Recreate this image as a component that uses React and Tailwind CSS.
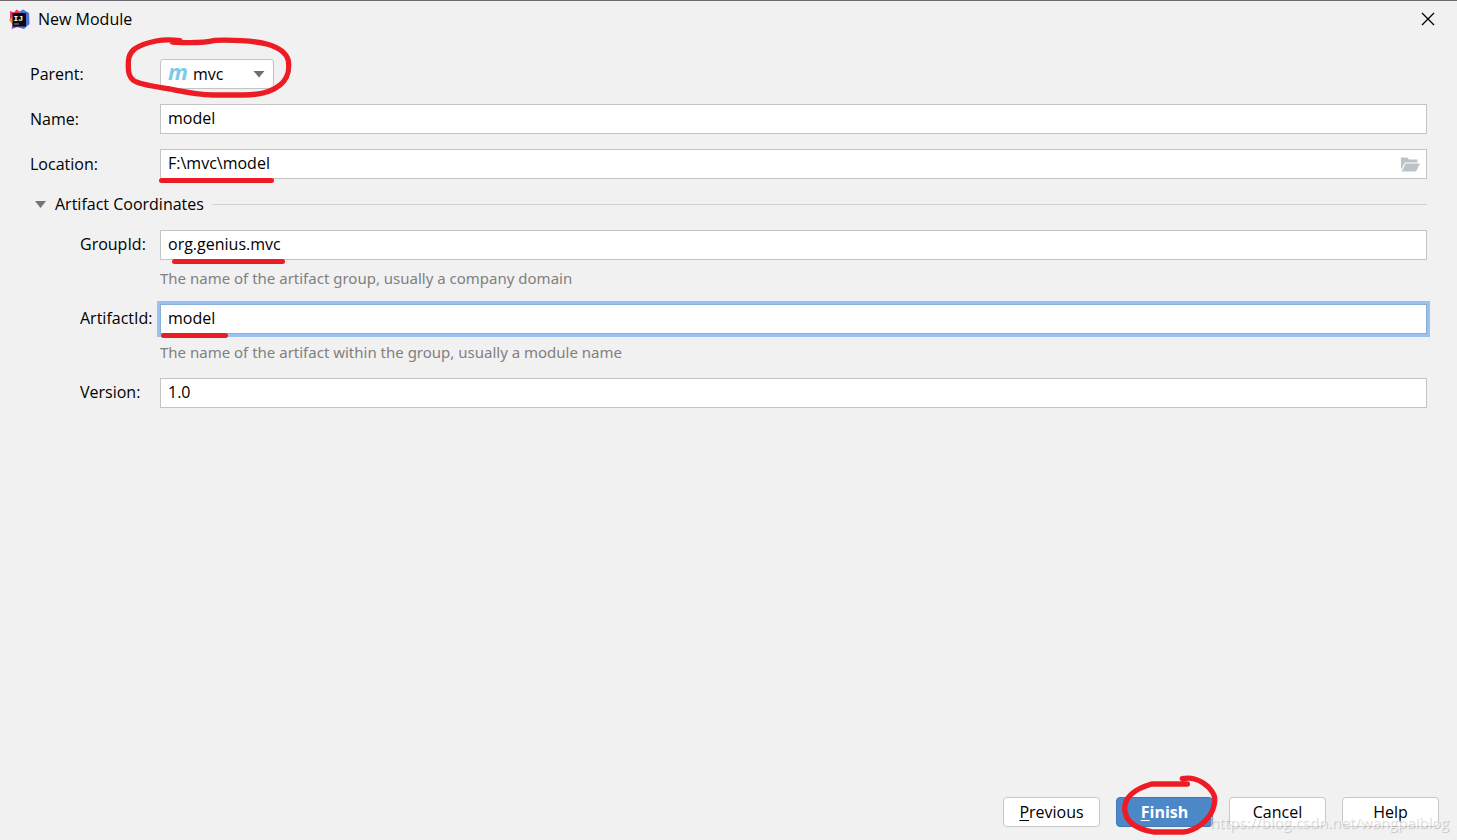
import { useState } from "react";

const inputClass =
  "h-[30px] w-full border border-[#c4c4c4] bg-white px-[7px] pb-[2px] text-base text-black outline-none";

function LogoIcon() {
  return (
    <svg viewBox="0 0 42 42" className="h-[21px] w-[21px]" aria-hidden="true">
      <path d="M2 4 L10 7 L15 1 L25 8 L20 24 L2 24 Z" fill="#f0306a" />
      <path d="M0 22 L8 15 L14 34 L7 31 Z" fill="#f98a1c" />
      <path d="M20 6 L28 1 L40 8 L41 30 L30 40 L16 36 Z" fill="#4c70dc" />
      <path d="M5 40 L8 28 L28 33 L14 37 Z" fill="#9a3fd0" />
      <rect x="7" y="8" width="27" height="27" fill="#0b0b0d" />
      <text x="9" y="23" fontSize="16" fontWeight="700" fill="#fff" fontFamily="Liberation Mono, monospace">IJ</text>
      <rect x="10" y="29" width="10" height="2" fill="#999" />
    </svg>
  );
}

function FolderIcon() {
  return (
    <svg viewBox="0 0 19 15" className="h-[15px] w-[19px]" aria-hidden="true">
      <path d="M0 0.5 H6 L8 2.5 H16.5 V5.5 H4 L0 12.5 Z" fill="#bcc3c7" />
      <path d="M4.5 6.5 H19 L15 14.5 H0.7 Z" fill="#bcc3c7" />
    </svg>
  );
}

// red marker line under a field
function Underline({ className }) {
  return <span className={`pointer-events-none absolute h-[5px] rounded-full bg-[#ed1c24] ${className}`} />;
}

function Row({ id, label, indent, children }) {
  return (
    <div className="flex items-center">
      <label
        htmlFor={id}
        className={
          indent ? "w-[130px] shrink-0 pb-[2px] pl-[50px] whitespace-nowrap" : "w-[130px] shrink-0"
        }
      >
        {label}
      </label>
      <div className="relative flex-1">{children}</div>
    </div>
  );
}

function Hint({ children }) {
  return (
    <p className="h-11 pt-2 pl-[130px] font-['Noto_Sans','Open_Sans',sans-serif] text-[15px] leading-5 text-[#808080]">
      {children}
    </p>
  );
}

export default function App() {
  const [name, setName] = useState("model");
  const [location, setLocation] = useState("F:\\mvc\\model");
  const [groupId, setGroupId] = useState("org.genius.mvc");
  const [artifactId, setArtifactId] = useState("model");
  const [version, setVersion] = useState("1.0");
  const [open, setOpen] = useState(true);

  const buttonClass = "h-[30px] w-[97px] rounded-[4px] border border-[#c8c8c8] bg-white";

  return (
    <div className="relative flex min-h-screen flex-col overflow-hidden border-t border-[#6e6b70] bg-[#f1f1f1] font-['Open_Sans','Noto_Sans',sans-serif] text-base leading-5 text-black">
      <header className="flex h-9 items-center gap-2 pr-[22px] pl-[9px]">
        <LogoIcon />
        <h1 className="flex-1">New Module</h1>
        <button type="button" aria-label="Close">
          <svg viewBox="0 0 14 14" className="h-[14px] w-[14px]" fill="none" stroke="#000" strokeWidth="1.3">
            <path d="M1 1 L13 13 M13 1 L1 13" />
          </svg>
        </button>
      </header>

      <main className="flex flex-1 flex-col gap-[15px] px-[30px] pt-[22px]">
        <Row id="parent" label="Parent:">
          <div className="relative w-[114px]">
            <select
              id="parent"
              className="h-[30px] w-full appearance-none rounded-[3px] border border-[#c4c4c4] bg-white pl-8 outline-none"
            >
              <option>mvc</option>
            </select>
            <svg viewBox="0 0 24 30" className="pointer-events-none absolute top-0 left-2 h-[30px] w-6 overflow-visible" aria-hidden="true">
              <text x="0" y="21" fontSize="22" fontWeight="700" fontStyle="italic" fill="#7ccbe8" fontFamily="Open Sans, sans-serif">m</text>
            </svg>
            <svg viewBox="0 0 12 7" className="pointer-events-none absolute top-3 right-[9px] h-[7px] w-3" aria-hidden="true">
              <path d="M0.5 0 H11.5 L6 6.5 Z" fill="#6e6e6e" />
            </svg>
            <svg
              viewBox="42 15 510 195"
              className="pointer-events-none absolute -top-6 -left-9 h-[65px] w-[170px] max-w-none"
              fill="none"
              stroke="#ed1c24"
              strokeWidth="16"
              strokeLinecap="round"
              strokeLinejoin="round"
              aria-hidden="true"
            >
              <path d="M210 32 C185 29 160 29 138 33 C110 39 88 47 75 56 C52 74 55 95 55 112 C55 140 65 152 85 158 C105 165 145 171 180 177 C225 186 260 194 310 195 L400 195 C450 195 485 186 510 165 C538 142 538 115 535 92 C528 65 500 50 470 42 C430 32 360 29 315 31 C285 38 230 39 187 36" />
            </svg>
          </div>
        </Row>

        <Row id="name" label="Name:">
          <input id="name" className={`block ${inputClass}`} value={name} onChange={(e) => setName(e.target.value)} />
        </Row>

        <Row id="location" label="Location:">
          <input
            id="location"
            className={`block ${inputClass}`}
            value={location}
            onChange={(e) => setLocation(e.target.value)}
          />
          <button type="button" aria-label="Browse" className="absolute top-2 right-[7px]">
            <FolderIcon />
          </button>
          <Underline className="-bottom-1 -left-px w-[115px]" />
        </Row>

        <button type="button" className="flex h-[21px] items-center pl-[5px]" onClick={() => setOpen(!open)}>
          <svg viewBox="0 0 11 7" className="mr-[9px] h-[7px] w-[11px]" aria-hidden="true">
            <path d="M0 0 H11 L5.5 7 Z" fill="#757575" />
          </svg>
          <span className="pb-[2px]">Artifact Coordinates</span>
          <span className="ml-2 h-px flex-1 bg-[#d0d0d0]" />
        </button>

        {open && (
          <section>
            <Row id="groupId" label="GroupId:" indent>
              <input
                id="groupId"
                className={`block ${inputClass}`}
                value={groupId}
                onChange={(e) => setGroupId(e.target.value)}
              />
              <Underline className="-bottom-1 left-3 w-[113px]" />
            </Row>
            <Hint>The name of the artifact group, usually a company domain</Hint>

            <Row id="artifactId" label="ArtifactId:" indent>
              <input
                id="artifactId"
                className="block h-[30px] w-full border border-[#87afda] bg-white px-[7px] pb-[2px] text-base text-black ring-3 ring-[#97c3f3] outline-none"
                value={artifactId}
                onChange={(e) => setArtifactId(e.target.value)}
              />
              <Underline className="-bottom-1 left-px w-[67px]" />
            </Row>
            <Hint>The name of the artifact within the group, usually a module name</Hint>

            <Row id="version" label="Version:" indent>
              <input
                id="version"
                className={`block ${inputClass}`}
                value={version}
                onChange={(e) => setVersion(e.target.value)}
              />
            </Row>
          </section>
        )}
      </main>

      <footer className="flex justify-end gap-4 pr-[18px] pb-[13px]">
        <button type="button" className={buttonClass}>
          <span className="underline underline-offset-2">P</span>revious
        </button>
        <div className="relative">
          <button
            type="button"
            className="h-[30px] w-[97px] rounded-[4px] border border-[#3f79b8] bg-[#4c88c8] font-bold text-white"
          >
            <span className="underline underline-offset-2">F</span>inish
          </button>
          <svg
            viewBox="390 24 300 192"
            className="pointer-events-none absolute -top-6 left-1 h-16 w-[100px] max-w-none"
            fill="none"
            stroke="#ed1c24"
            strokeWidth="16"
            strokeLinecap="round"
            strokeLinejoin="round"
            aria-hidden="true"
          >
            <path d="M592 57 L485 57 C440 70 405 90 404 130 C405 170 440 192 490 201 L580 201 C620 197 655 165 668 135 C680 100 675 88 655 66 C630 42 600 36 577 41" />
          </svg>
        </div>
        <button type="button" className={buttonClass}>Cancel</button>
        <button type="button" className={buttonClass}>Help</button>
      </footer>

      <span className="pointer-events-none absolute right-2 bottom-2 text-[15px] text-white/60 [text-shadow:1px_1px_1px_rgba(0,0,0,0.2)]">
        https://blog.csdn.net/wangpaiblog
      </span>
    </div>
  );
}
